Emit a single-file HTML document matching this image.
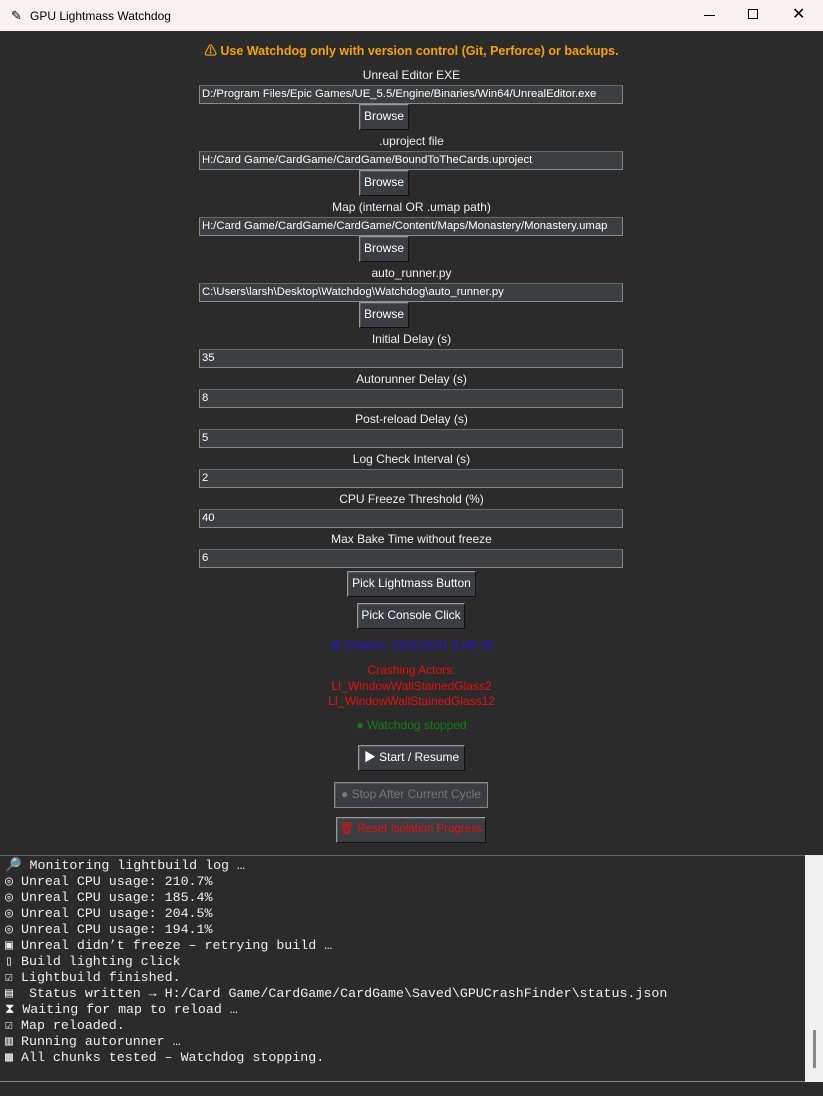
<!DOCTYPE html>
<html><head><meta charset="utf-8"><style>
*{margin:0;padding:0;box-sizing:border-box}
body{width:823px;height:1096px;background:#2b2b2b;position:relative;overflow:hidden;font-family:"Liberation Sans","Noto Sans CJK JP",sans-serif;font-size:12px;color:#fff}
.a{position:absolute}
.title{left:0;top:0;width:823px;height:31px;background:#f9f1ef;color:#000}
.lbl{left:0;width:823px;text-align:center;color:#f0f0f0;font-size:12px;line-height:14px}
.ent{left:199px;width:424px;height:19px;background:#3c3f41;border:1px solid #8a8a8a;border-top-color:#6a6a6a;color:#fff;font-size:11.3px;line-height:17px;padding-left:2px;white-space:nowrap;overflow:hidden}
.btn{background:#3a3d41;border:1px solid #9a9a9a;border-right-color:#111;border-bottom-color:#111;color:#fff;text-align:center;font-size:12px;line-height:23px;box-shadow:inset 1px 1px 0 #555;white-space:nowrap}
.log{left:0;top:855px;width:805px;height:227px;background:#2b2b2b;border-top:1px solid #666;font-family:"Liberation Mono",monospace;font-size:13.3px;line-height:16px;color:#f0f0f0;padding:2px 0 0 5px;white-space:pre;overflow:hidden}
</style></head><body>
<div class="a title">
 <div class="a" style="left:11px;top:8px;font-size:13px">✎</div>
 <div class="a" style="left:30px;top:9px;font-size:12px">GPU Lightmass Watchdog</div>
 <div class="a" style="left:704px;top:15px;width:11px;height:1px;background:#000"></div>
 <div class="a" style="left:748px;top:9px;width:10px;height:10px;border:1px solid #000"></div>
 <div class="a" style="left:792px;top:4px;font-size:16px">✕</div>
</div>
<div class="a" style="left:0;top:40px;width:823px;text-align:center;color:#f5a300;font-weight:bold;font-size:12.5px">⚠ Use Watchdog only with version control (Git, Perforce) or backups.</div>

<div class="a lbl" style="top:68px">Unreal Editor EXE</div>
<div class="a ent" style="top:85px">D:/Program Files/Epic Games/UE_5.5/Engine/Binaries/Win64/UnrealEditor.exe</div>
<div class="a btn" style="left:359px;top:104px;width:50px;height:26px">Browse</div>

<div class="a lbl" style="top:134px">.uproject file</div>
<div class="a ent" style="top:151px">H:/Card Game/CardGame/CardGame/BoundToTheCards.uproject</div>
<div class="a btn" style="left:359px;top:170px;width:50px;height:26px">Browse</div>

<div class="a lbl" style="top:200px">Map (internal OR .umap path)</div>
<div class="a ent" style="top:217px">H:/Card Game/CardGame/CardGame/Content/Maps/Monastery/Monastery.umap</div>
<div class="a btn" style="left:359px;top:236px;width:50px;height:26px">Browse</div>

<div class="a lbl" style="top:266px">auto_runner.py</div>
<div class="a ent" style="top:283px">C:\Users\larsh\Desktop\Watchdog\Watchdog\auto_runner.py</div>
<div class="a btn" style="left:359px;top:302px;width:50px;height:26px">Browse</div>

<div class="a lbl" style="top:332px">Initial Delay (s)</div>
<div class="a ent" style="top:349px">35</div>
<div class="a lbl" style="top:372px">Autorunner Delay (s)</div>
<div class="a ent" style="top:389px">8</div>
<div class="a lbl" style="top:412px">Post-reload Delay (s)</div>
<div class="a ent" style="top:429px">5</div>
<div class="a lbl" style="top:452px">Log Check Interval (s)</div>
<div class="a ent" style="top:469px">2</div>
<div class="a lbl" style="top:492px">CPU Freeze Threshold (%)</div>
<div class="a ent" style="top:509px">40</div>
<div class="a lbl" style="top:532px">Max Bake Time without freeze</div>
<div class="a ent" style="top:549px">6</div>

<div class="a btn" style="left:347px;top:571px;width:129px;height:26px">Pick Lightmass Button</div>
<div class="a btn" style="left:357px;top:603px;width:108px;height:26px">Pick Console Click</div>

<div class="a lbl" style="top:638px;color:#1818e8">⚙ Chunks: 2101/2101 (Left: 0)</div>
<div class="a lbl" style="top:663px;color:#e81010;line-height:15.5px">Crashing Actors:<br>LI_WindowWallStainedGlass2<br>LI_WindowWallStainedGlass12</div>
<div class="a lbl" style="top:718px;color:#108010">● Watchdog stopped</div>

<div class="a btn" style="left:358px;top:745px;width:107px;height:26px">▶ Start / Resume</div>
<div class="a btn" style="left:334px;top:782px;width:154px;height:26px;color:#777;border-color:#888">● Stop After Current Cycle</div>
<div class="a btn" style="left:336px;top:817px;width:150px;height:26px;color:#e81010;font-size:11.5px">🗑 Reset Isolation Progress</div>

<div class="a log">🔎 Monitoring lightbuild log …
◎ Unreal CPU usage: 210.7%
◎ Unreal CPU usage: 185.4%
◎ Unreal CPU usage: 204.5%
◎ Unreal CPU usage: 194.1%
▣ Unreal didn’t freeze – retrying build …
▯ Build lighting click
☑ Lightbuild finished.
▤  Status written → H:/Card Game/CardGame/CardGame\Saved\GPUCrashFinder\status.json
⧗ Waiting for map to reload …
☑ Map reloaded.
▥ Running autorunner …
▩ All chunks tested – Watchdog stopping.</div>
<div class="a" style="left:805px;top:855px;width:18px;height:227px;background:#f0f0f0"></div>
<div class="a" style="left:813px;top:1030px;width:3px;height:38px;background:#888"></div>
<div class="a" style="left:0;top:1081px;width:805px;height:1px;background:#888"></div>
</body></html>
